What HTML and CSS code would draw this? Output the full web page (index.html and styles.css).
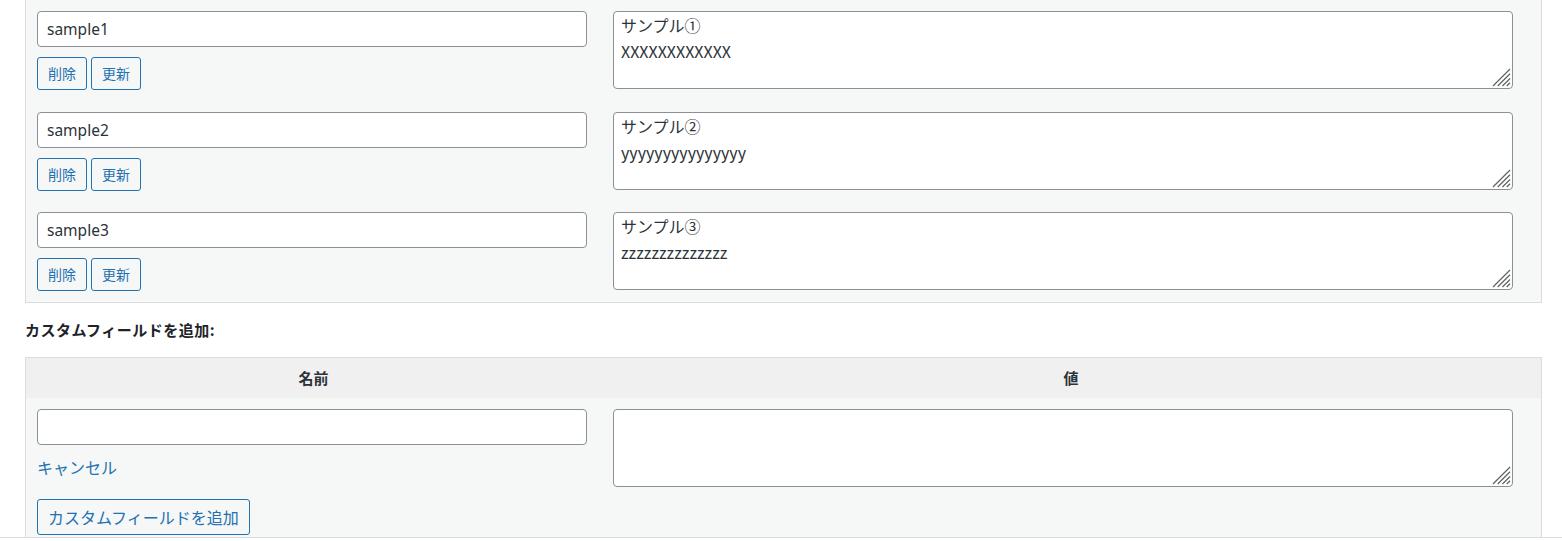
FILE: index.html
```html
<!DOCTYPE html>
<html lang="ja">
<head>
<meta charset="utf-8">
<title>カスタムフィールド</title>
<link rel="stylesheet" href="styles.css">
</head>
<body>
<div class="postbox">
  <div class="fields fields-list">
    <div class="row">
      <div class="cell-left">
        <input class="key" type="text" value="sample1">
        <div class="actions">
          <button class="button">削除</button>
          <button class="button">更新</button>
        </div>
      </div>
      <div class="cell-right">
        <div class="ta-wrap">
          <textarea class="value">サンプル①
XXXXXXXXXXXX</textarea>
          <svg class="grip" viewBox="0 0 20 20" aria-hidden="true"><path d="M1 19L19 1M6 19L19 6M11 19L19 11M15.5 19L19 15.5"/></svg>
        </div>
      </div>
    </div>
    <div class="row">
      <div class="cell-left">
        <input class="key" type="text" value="sample2">
        <div class="actions">
          <button class="button">削除</button>
          <button class="button">更新</button>
        </div>
      </div>
      <div class="cell-right">
        <div class="ta-wrap">
          <textarea class="value">サンプル②
yyyyyyyyyyyyyyy</textarea>
          <svg class="grip" viewBox="0 0 20 20" aria-hidden="true"><path d="M1 19L19 1M6 19L19 6M11 19L19 11M15.5 19L19 15.5"/></svg>
        </div>
      </div>
    </div>
    <div class="row">
      <div class="cell-left">
        <input class="key" type="text" value="sample3">
        <div class="actions">
          <button class="button">削除</button>
          <button class="button">更新</button>
        </div>
      </div>
      <div class="cell-right">
        <div class="ta-wrap">
          <textarea class="value">サンプル③
zzzzzzzzzzzzzz</textarea>
          <svg class="grip" viewBox="0 0 20 20" aria-hidden="true"><path d="M1 19L19 1M6 19L19 6M11 19L19 11M15.5 19L19 15.5"/></svg>
        </div>
      </div>
    </div>
  </div>

  <p class="add-title"><strong>カスタムフィールドを追加:</strong></p>

  <div class="fields fields-new">
    <div class="head">
      <div class="th">名前</div>
      <div class="th">値</div>
    </div>
    <div class="row new-row">
      <div class="cell-left">
        <input class="key" type="text" value="">
        <a class="cancel" href="#">キャンセル</a>
      </div>
      <div class="cell-right">
        <div class="ta-wrap">
          <textarea class="value"></textarea>
          <svg class="grip" viewBox="0 0 20 20" aria-hidden="true"><path d="M1 19L19 1M6 19L19 6M11 19L19 11M15.5 19L19 15.5"/></svg>
        </div>
      </div>
    </div>
    <div class="submit-row">
      <button class="button button-large">カスタムフィールドを追加</button>
    </div>
  </div>
</div>
</body>
</html>
```

FILE: styles.css
```css
html, body {
  margin: 0;
  padding: 0;
  background: #ffffff;
}

body {
  font-family: "Noto Sans", "Noto Sans CJK JP", sans-serif;
  color: #2c3338;
}

.postbox {
  box-sizing: border-box;
  height: 538px;
  overflow: hidden;
  border-bottom: 1px solid #dcdcde;
  padding: 0 20px 0 25px;
}

.fields {
  background: #f6f7f7;
  border: 1px solid #dcdcde;
}

.fields-list {
  border-top: 0;
}

.row {
  display: grid;
  grid-template-columns: 575px 1fr;
  padding: 11px 0 10.5px;
}

.cell-left {
  padding-left: 11px;
  display: flex;
  flex-direction: column;
  align-items: flex-start;
}

.cell-right {
  padding-left: 12px;
}

.key {
  box-sizing: border-box;
  width: 550px;
  height: 36px;
  margin: 0;
  padding: 0 9px;
  border: 1px solid #8c8f94;
  border-radius: 4px;
  background: #ffffff;
  font-family: "Noto Sans", "Noto Sans CJK JP", sans-serif;
  font-size: 15.5px;
  color: #2c3338;
  outline: none;
}

.ta-wrap {
  position: relative;
  width: 900px;
}

.value {
  display: block;
  box-sizing: border-box;
  width: 900px;
  height: 78px;
  margin: 0;
  padding: 0 7px;
  border: 1px solid #8c8f94;
  border-radius: 4px;
  background: #ffffff;
  font-family: "Noto Sans CJK JP", sans-serif;
  font-size: 16px;
  line-height: 26px;
  color: #2c3338;
  outline: none;
  resize: none;
}

.grip {
  position: absolute;
  right: 2px;
  bottom: 2px;
  width: 19px;
  height: 19px;
  fill: none;
  stroke: #5f6368;
  stroke-width: 1.3;
  pointer-events: none;
}

.actions {
  display: flex;
  gap: 4px;
  margin-top: 10px;
}

.button {
  box-sizing: border-box;
  height: 33px;
  margin: 0;
  padding: 0 10px;
  border: 1px solid #2271b1;
  border-radius: 3px;
  background: #f6f7f7;
  color: #2271b1;
  font-family: "Noto Sans CJK JP", sans-serif;
  font-size: 14px;
  line-height: 31px;
  cursor: pointer;
}

.add-title {
  margin: 17px 0 17px;
  font-size: 15px;
  line-height: 20px;
  color: #1d2327;
  font-family: "Noto Sans CJK JP", sans-serif;
  letter-spacing: 0.5px;
}

.add-title strong {
  font-weight: 700;
}

.head {
  display: grid;
  grid-template-columns: 575px 1fr;
  height: 40px;
  background: #f0f0f1;
}

.th {
  text-align: center;
  font-family: "Noto Sans CJK JP", sans-serif;
  font-weight: 700;
  font-size: 15px;
  line-height: 40px;
  color: #2c3338;
}

.new-row {
  padding-bottom: 0;
}

.cancel {
  margin-top: 11px;
  font-family: "Noto Sans CJK JP", sans-serif;
  font-size: 16px;
  line-height: 22px;
  color: #2271b1;
  text-decoration: none;
}

.submit-row {
  padding: 12px 11px 12px;
}

.button-large {
  height: 36px;
  padding: 0 10px;
  font-size: 16px;
  line-height: 34px;
}
```
